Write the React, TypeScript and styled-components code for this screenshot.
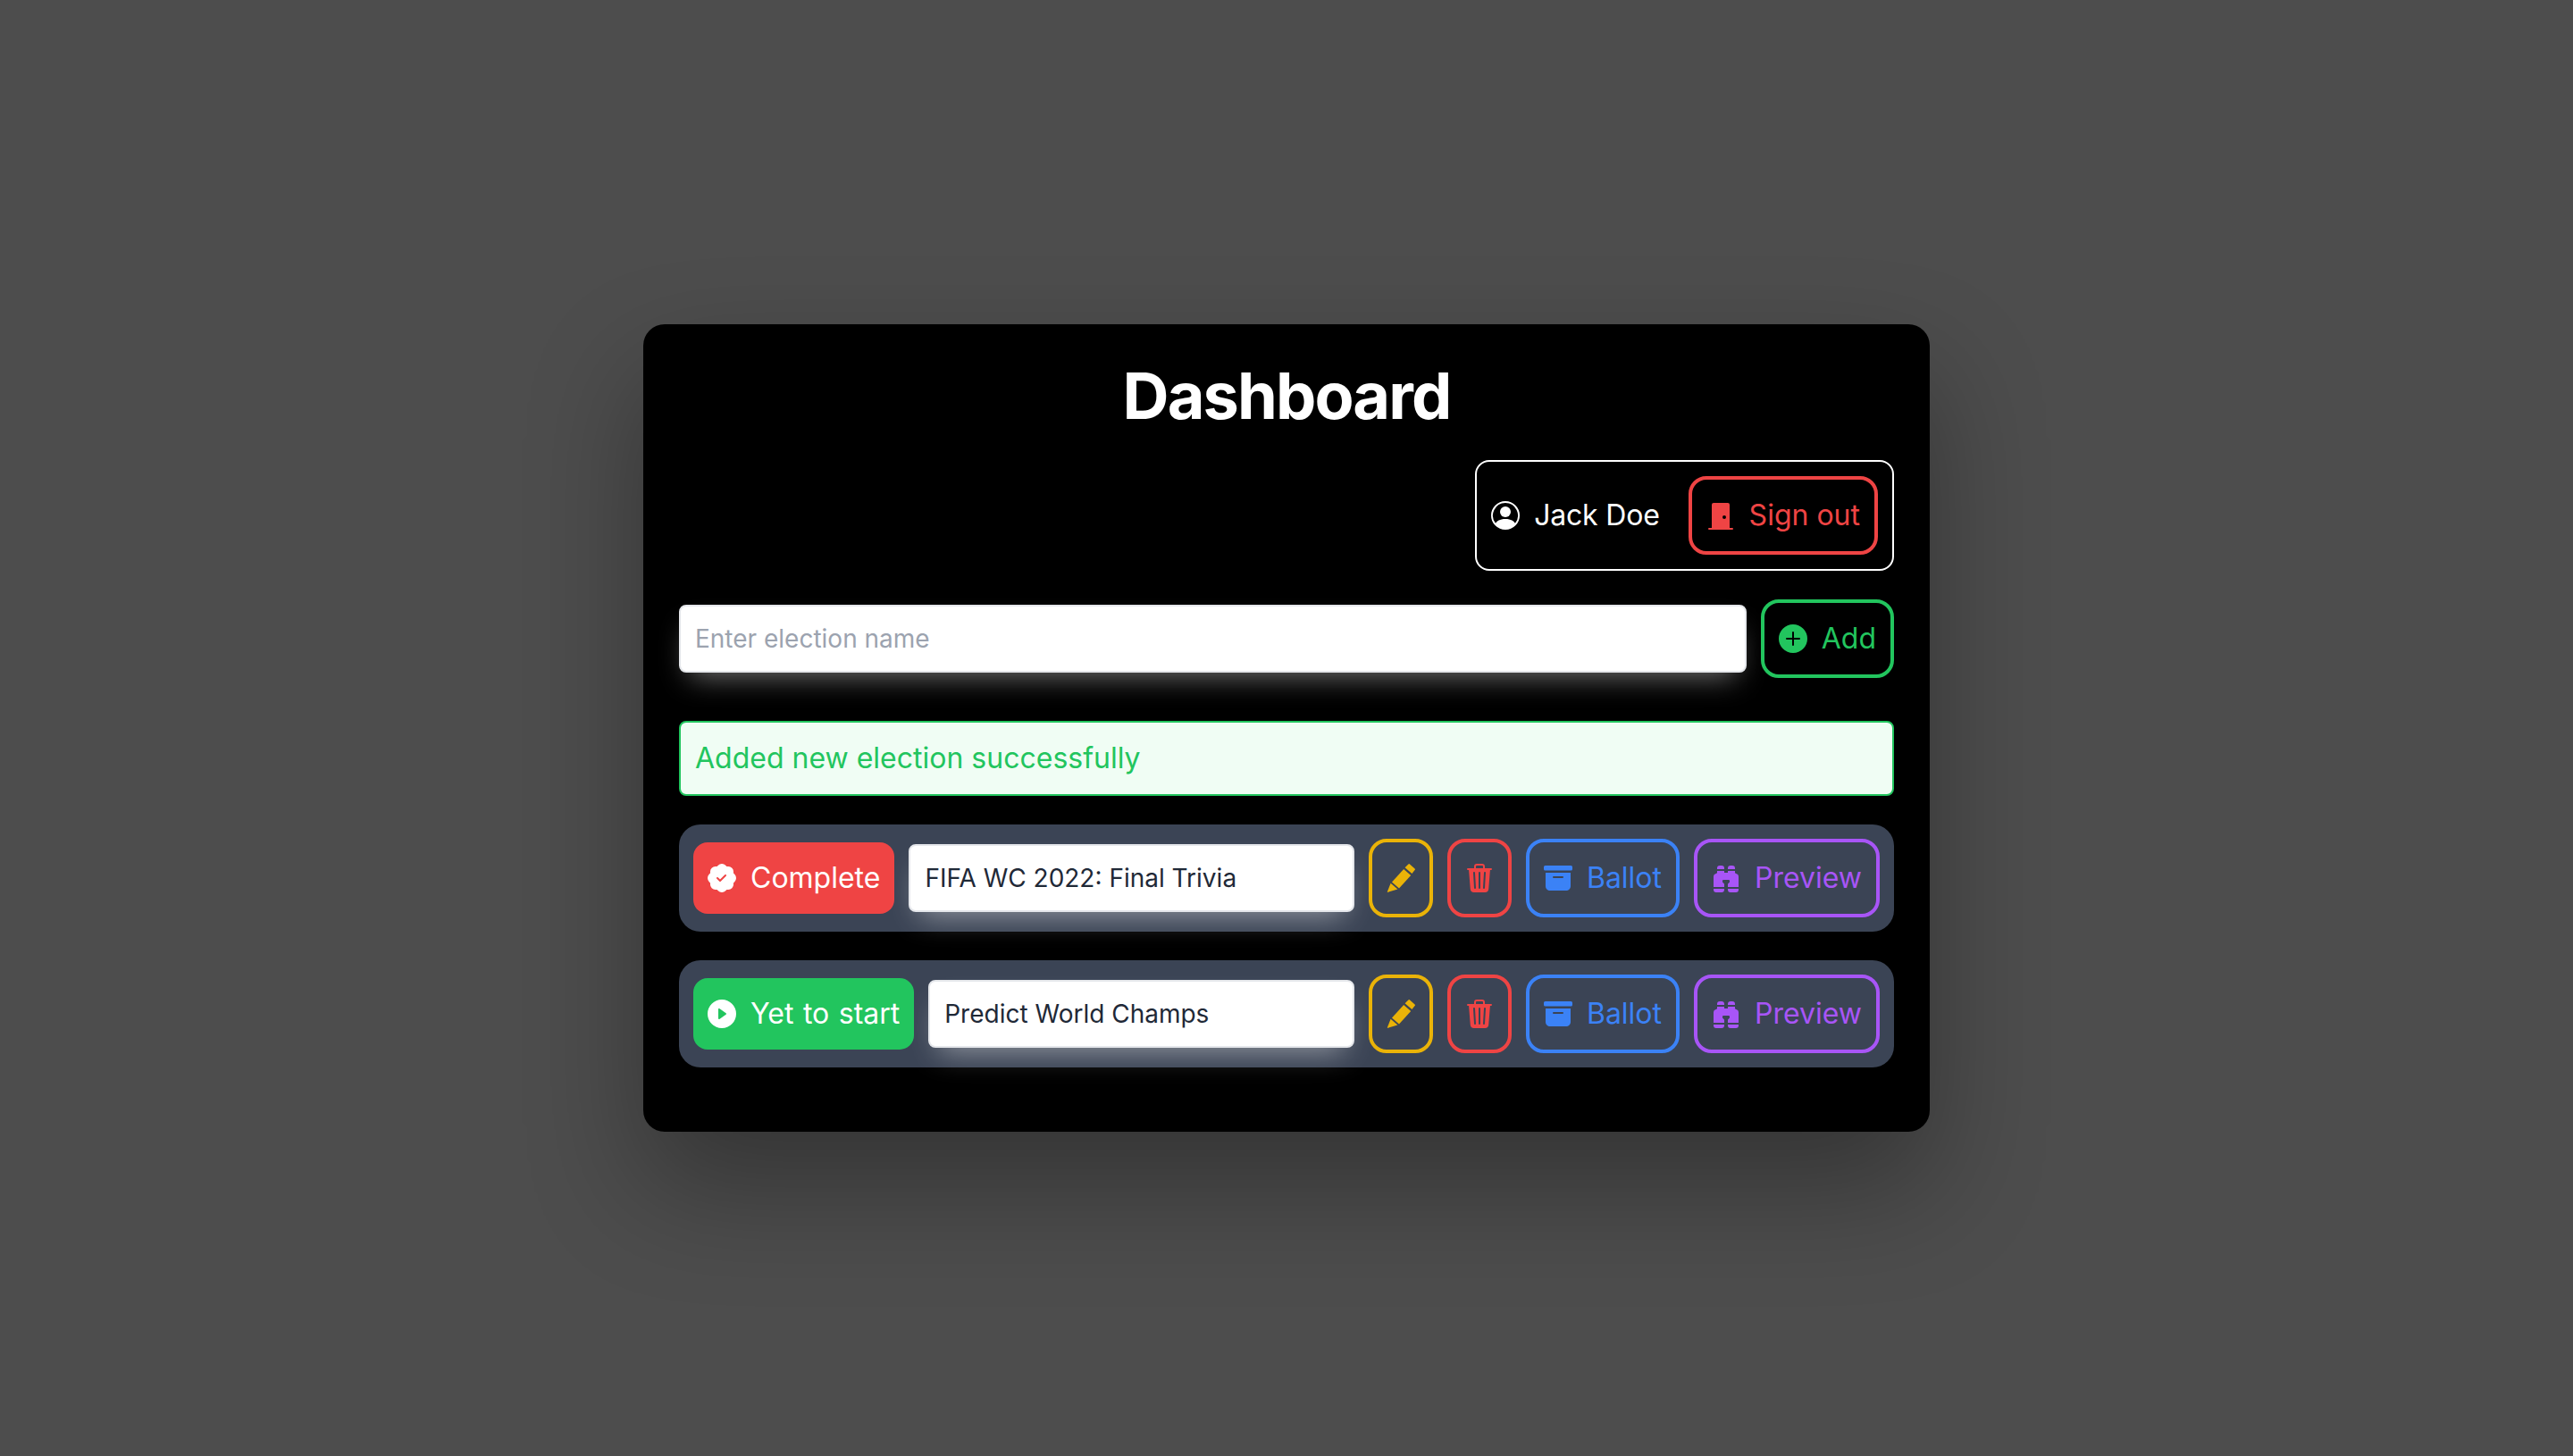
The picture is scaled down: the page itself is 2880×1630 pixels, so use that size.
import styled, { createGlobalStyle } from 'styled-components';
import {
    BsPersonCircle,
    BsDoorClosedFill,
    BsPlusCircleFill,
    BsPatchCheckFill,
    BsPlayCircleFill,
    BsTrash3Fill,
    BsArchiveFill,
    BsBinocularsFill,
} from 'react-icons/bs';

type Election = {
    id: number,
    name: string,
    status: 'complete' | 'pending'
}

const elections: Election[] = [
    { id: 1, name: 'FIFA WC 2022: Final Trivia', status: 'complete' },
    { id: 2, name: 'Predict World Champs', status: 'pending' },
];

const GlobalStyle = createGlobalStyle`
    * {
        box-sizing: border-box;
    }
    html, body {
        margin: 0;
        padding: 0;
        background: #4d4d4d;
    }
    body {
        font-family: Inter, "Liberation Sans", sans-serif;
    }
`;

const Page = styled.div`
    height: 1630px;
    display: flex;
    align-items: center;
    justify-content: center;
`;

const Card = styled.main`
    width: 1440px;
    padding: 40px;
    background: #000;
    border-radius: 24px;
    box-shadow: 0 60px 130px rgba(0, 0, 0, 0.32);
`;

const Title = styled.h1`
    margin: 0 0 32px;
    color: #fff;
    font-size: 72px;
    line-height: 80px;
    font-weight: 700;
    letter-spacing: -1.9px;
    text-align: center;
`;

const UserRow = styled.div`
    display: flex;
    justify-content: flex-end;
    margin-bottom: 32px;
`;

const UserBox = styled.div`
    display: flex;
    align-items: center;
    gap: 32px;
    padding: 16px;
    border: 2px solid #fff;
    border-radius: 16px;
`;

const UserName = styled.span`
    display: flex;
    align-items: center;
    gap: 16px;
    color: #fff;
    font-size: 32px;
    line-height: 56px;
    letter-spacing: -0.2px;
    svg {
        width: 32px;
        height: 32px;
    }
`;

const OutlineButton = styled.button<{ $color: string }>`
    display: flex;
    flex: none;
    align-items: center;
    gap: 16px;
    height: 88px;
    padding: 12px 16px;
    background: transparent;
    border: 4px solid ${p => p.$color};
    border-radius: 20px;
    color: ${p => p.$color};
    font-family: inherit;
    font-size: 32px;
    line-height: 56px;
    svg {
        width: 32px;
        height: 32px;
    }
`;

const AddRow = styled.div`
    display: flex;
    align-items: center;
    gap: 16px;
    margin-bottom: 48px;
`;

const TextField = styled.input`
    flex: 1;
    min-width: 0;
    height: 76px;
    padding: 12px 16px;
    background: #fff;
    border: 2px solid #e5e7eb;
    border-radius: 8px;
    color: #1f2937;
    font-family: inherit;
    font-size: 28px;
    line-height: 48px;
    outline: none;
    box-shadow: 0 16px 32px -12px rgba(255, 255, 255, 0.45);
    &::placeholder {
        color: #9ca3af;
        opacity: 1;
    }
`;

const Alert = styled.div`
    margin-bottom: 32px;
    padding: 12px 16px;
    background: #f0fdf4;
    border: 2px solid #22c55e;
    border-radius: 8px;
    color: #22c55e;
    font-size: 32px;
    line-height: 56px;
`;

const ElectionRow = styled.div`
    display: flex;
    align-items: center;
    gap: 16px;
    margin-bottom: 32px;
    padding: 16px;
    background: #3b4455;
    border-radius: 24px;
`;

const StatusPill = styled.span<{ $bg: string }>`
    display: flex;
    flex: none;
    align-items: center;
    gap: 16px;
    padding: 12px 16px;
    background: ${p => p.$bg};
    border-radius: 16px;
    color: #fff;
    font-size: 32px;
    line-height: 56px;
    word-spacing: 1.5px;
    svg {
        width: 32px;
        height: 32px;
    }
`;

// the pencil isn't in the icon set in this shape, so it is drawn by hand
const PencilIcon = () => (
    <svg viewBox="0 0 16 16" fill="currentColor">
        <path d="M12.2.2a.6.6 0 0 1 .8 0l2.8 2.5a.6.6 0 0 1 0 .8l-1.6 2-3.9-3.4z" />
        <path d="M9.6 3 13.6 6.5 7 13.8 3 10.2z" />
        <path d="M2.3 10.9 6.2 14.3.3 16z" />
    </svg>
);

const App = () => {
    return (
        <Page>
            <GlobalStyle />
            <Card>
                <Title>Dashboard</Title>
                <UserRow>
                    <UserBox>
                        <UserName><BsPersonCircle />Jack Doe</UserName>
                        <OutlineButton $color="#ef4444"><BsDoorClosedFill />Sign out</OutlineButton>
                    </UserBox>
                </UserRow>
                <AddRow>
                    <TextField placeholder="Enter election name" />
                    <OutlineButton $color="#22c55e"><BsPlusCircleFill />Add</OutlineButton>
                </AddRow>
                <Alert>Added new election successfully</Alert>
                {elections.map(item => (
                    <ElectionRow key={item.id}>
                        {item.status === 'complete'
                            ? <StatusPill $bg="#ef4444"><BsPatchCheckFill />Complete</StatusPill>
                            : <StatusPill $bg="#22c55e"><BsPlayCircleFill />Yet to start</StatusPill>}
                        <TextField defaultValue={item.name} />
                        <OutlineButton $color="#eab308"><PencilIcon /></OutlineButton>
                        <OutlineButton $color="#ef4444"><BsTrash3Fill /></OutlineButton>
                        <OutlineButton $color="#3b82f6"><BsArchiveFill />Ballot</OutlineButton>
                        <OutlineButton $color="#a855f7"><BsBinocularsFill />Preview</OutlineButton>
                    </ElectionRow>
                ))}
            </Card>
        </Page>
    );
}

export default App;
